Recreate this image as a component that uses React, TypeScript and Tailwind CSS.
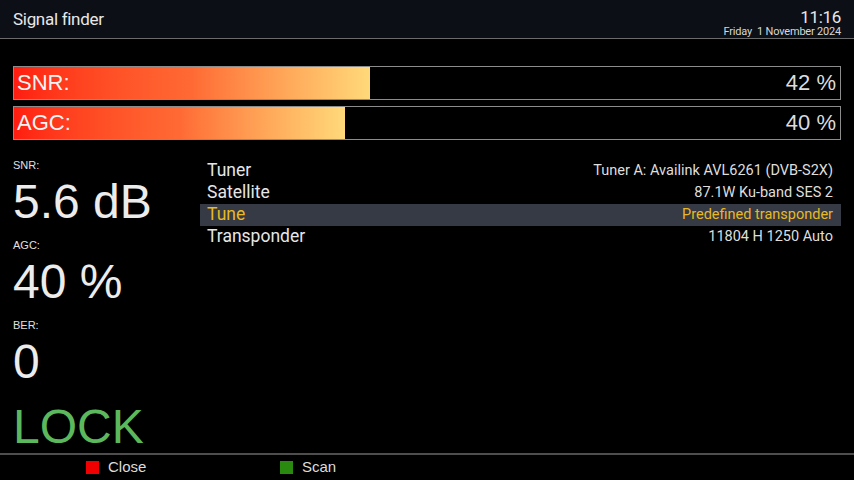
import React from "react";

const bars = [
  { label: "SNR:", value: "42 %", fill: 356 },
  { label: "AGC:", value: "40 %", fill: 331 },
];

const stats = [
  { label: "SNR:", value: "5.6 dB" },
  { label: "AGC:", value: "40 %" },
  { label: "BER:", value: "0" },
];

const rows = [
  { label: "Tuner", value: "Tuner A: Availink AVL6261 (DVB-S2X)", active: false },
  { label: "Satellite", value: "87.1W Ku-band SES 2", active: false },
  { label: "Tune", value: "Predefined transponder", active: true },
  { label: "Transponder", value: "11804 H 1250 Auto", active: false },
];

export default function App() {
  return (
    <div className="w-[854px] h-[480px] bg-black flex flex-col overflow-hidden text-[#e6e6e6]" style={{ fontFamily: '"Liberation Sans", Arial, sans-serif' }}>
      {/* Header */}
      <div className="h-[39px] bg-[#0c0f16] border-b border-[#6b6b6b] flex justify-between items-start px-[13px] shrink-0">
        <div className="pt-[9px] text-[17px] leading-[20px] text-[#e8e8e8] tracking-[-0.3px]" style={{ fontFamily: 'Roboto, sans-serif' }}>Signal finder</div>
        <div className="flex flex-col items-end pt-[9px]" style={{ fontFamily: 'Roboto, sans-serif' }}>
          <div className="text-[17px] leading-[17px] text-[#e8e8e8] tracking-[-0.3px]">11:16</div>
          <div className="text-[11px] leading-[11px] text-[#d8d8d8] tracking-[-0.2px] whitespace-pre">Friday  1 November 2024</div>
        </div>
      </div>

      {/* Bars */}
      <div className="px-[13px] mt-[27px] flex flex-col gap-[6px] shrink-0">
        {bars.map((b) => (
          <div key={b.label} className="relative h-[34px] border border-[#8c8c8c] bg-black">
            <div
              className="absolute left-0 top-0 bottom-0 bg-gradient-to-r from-[#ff1c10] via-[#ff6a34] to-[#ffd97a]"
              style={{ width: b.fill }}
            />
            <div className="relative h-full flex items-center justify-between pl-[3px] pr-[4px] text-[22px] leading-none">
              <span className="text-[#f4f4f4]">{b.label}</span>
              <span className="text-[#dcdcdc]">{b.value}</span>
            </div>
          </div>
        ))}
      </div>

      {/* Main */}
      <div className="flex mt-[19px] flex-1 min-h-0">
        <div className="w-[200px] pl-[13px] flex flex-col shrink-0">
          {stats.map((s) => (
            <div key={s.label} className="h-[80px] flex flex-col">
              <div className="text-[11px] leading-[13px] text-[#e0e0e0]">{s.label}</div>
              <div className="mt-[6px] text-[48px] leading-[48px] text-[#ececec]">{s.value}</div>
            </div>
          ))}
          <div className="mt-[4px] text-[48px] leading-[48px] text-[#5cb85c]">LOCK</div>
        </div>
        <div className="w-[641px] flex flex-col pt-[1px]" style={{ fontFamily: 'Roboto, sans-serif' }}>
          {rows.map((r) => (
            <div
              key={r.label}
              className={`h-[22px] flex items-center justify-between pl-[7px] pr-[8px] ${r.active ? "bg-[#363a45]" : ""}`}
            >
              <span className={`text-[17.5px] leading-none ${r.active ? "text-[#e8b923]" : "text-[#e6e6e6]"}`}>{r.label}</span>
              <span className={`text-[14.5px] leading-none ${r.active ? "text-[#e8b923]" : "text-[#dedede]"}`}>{r.value}</span>
            </div>
          ))}
        </div>
      </div>

      {/* Footer */}
      <div className="h-[27px] border-t-2 border-[#4e4e4e] flex items-center shrink-0 text-[15px] text-[#dcdcdc]">
        <div className="flex items-center ml-[86px] w-[194px]">
          <span className="w-[13px] h-[13px] bg-[#f00000] mr-[9px]" />
          <span>Close</span>
        </div>
        <div className="flex items-center">
          <span className="w-[13px] h-[13px] bg-[#2a8a10] mr-[9px]" />
          <span>Scan</span>
        </div>
      </div>
    </div>
  );
}
